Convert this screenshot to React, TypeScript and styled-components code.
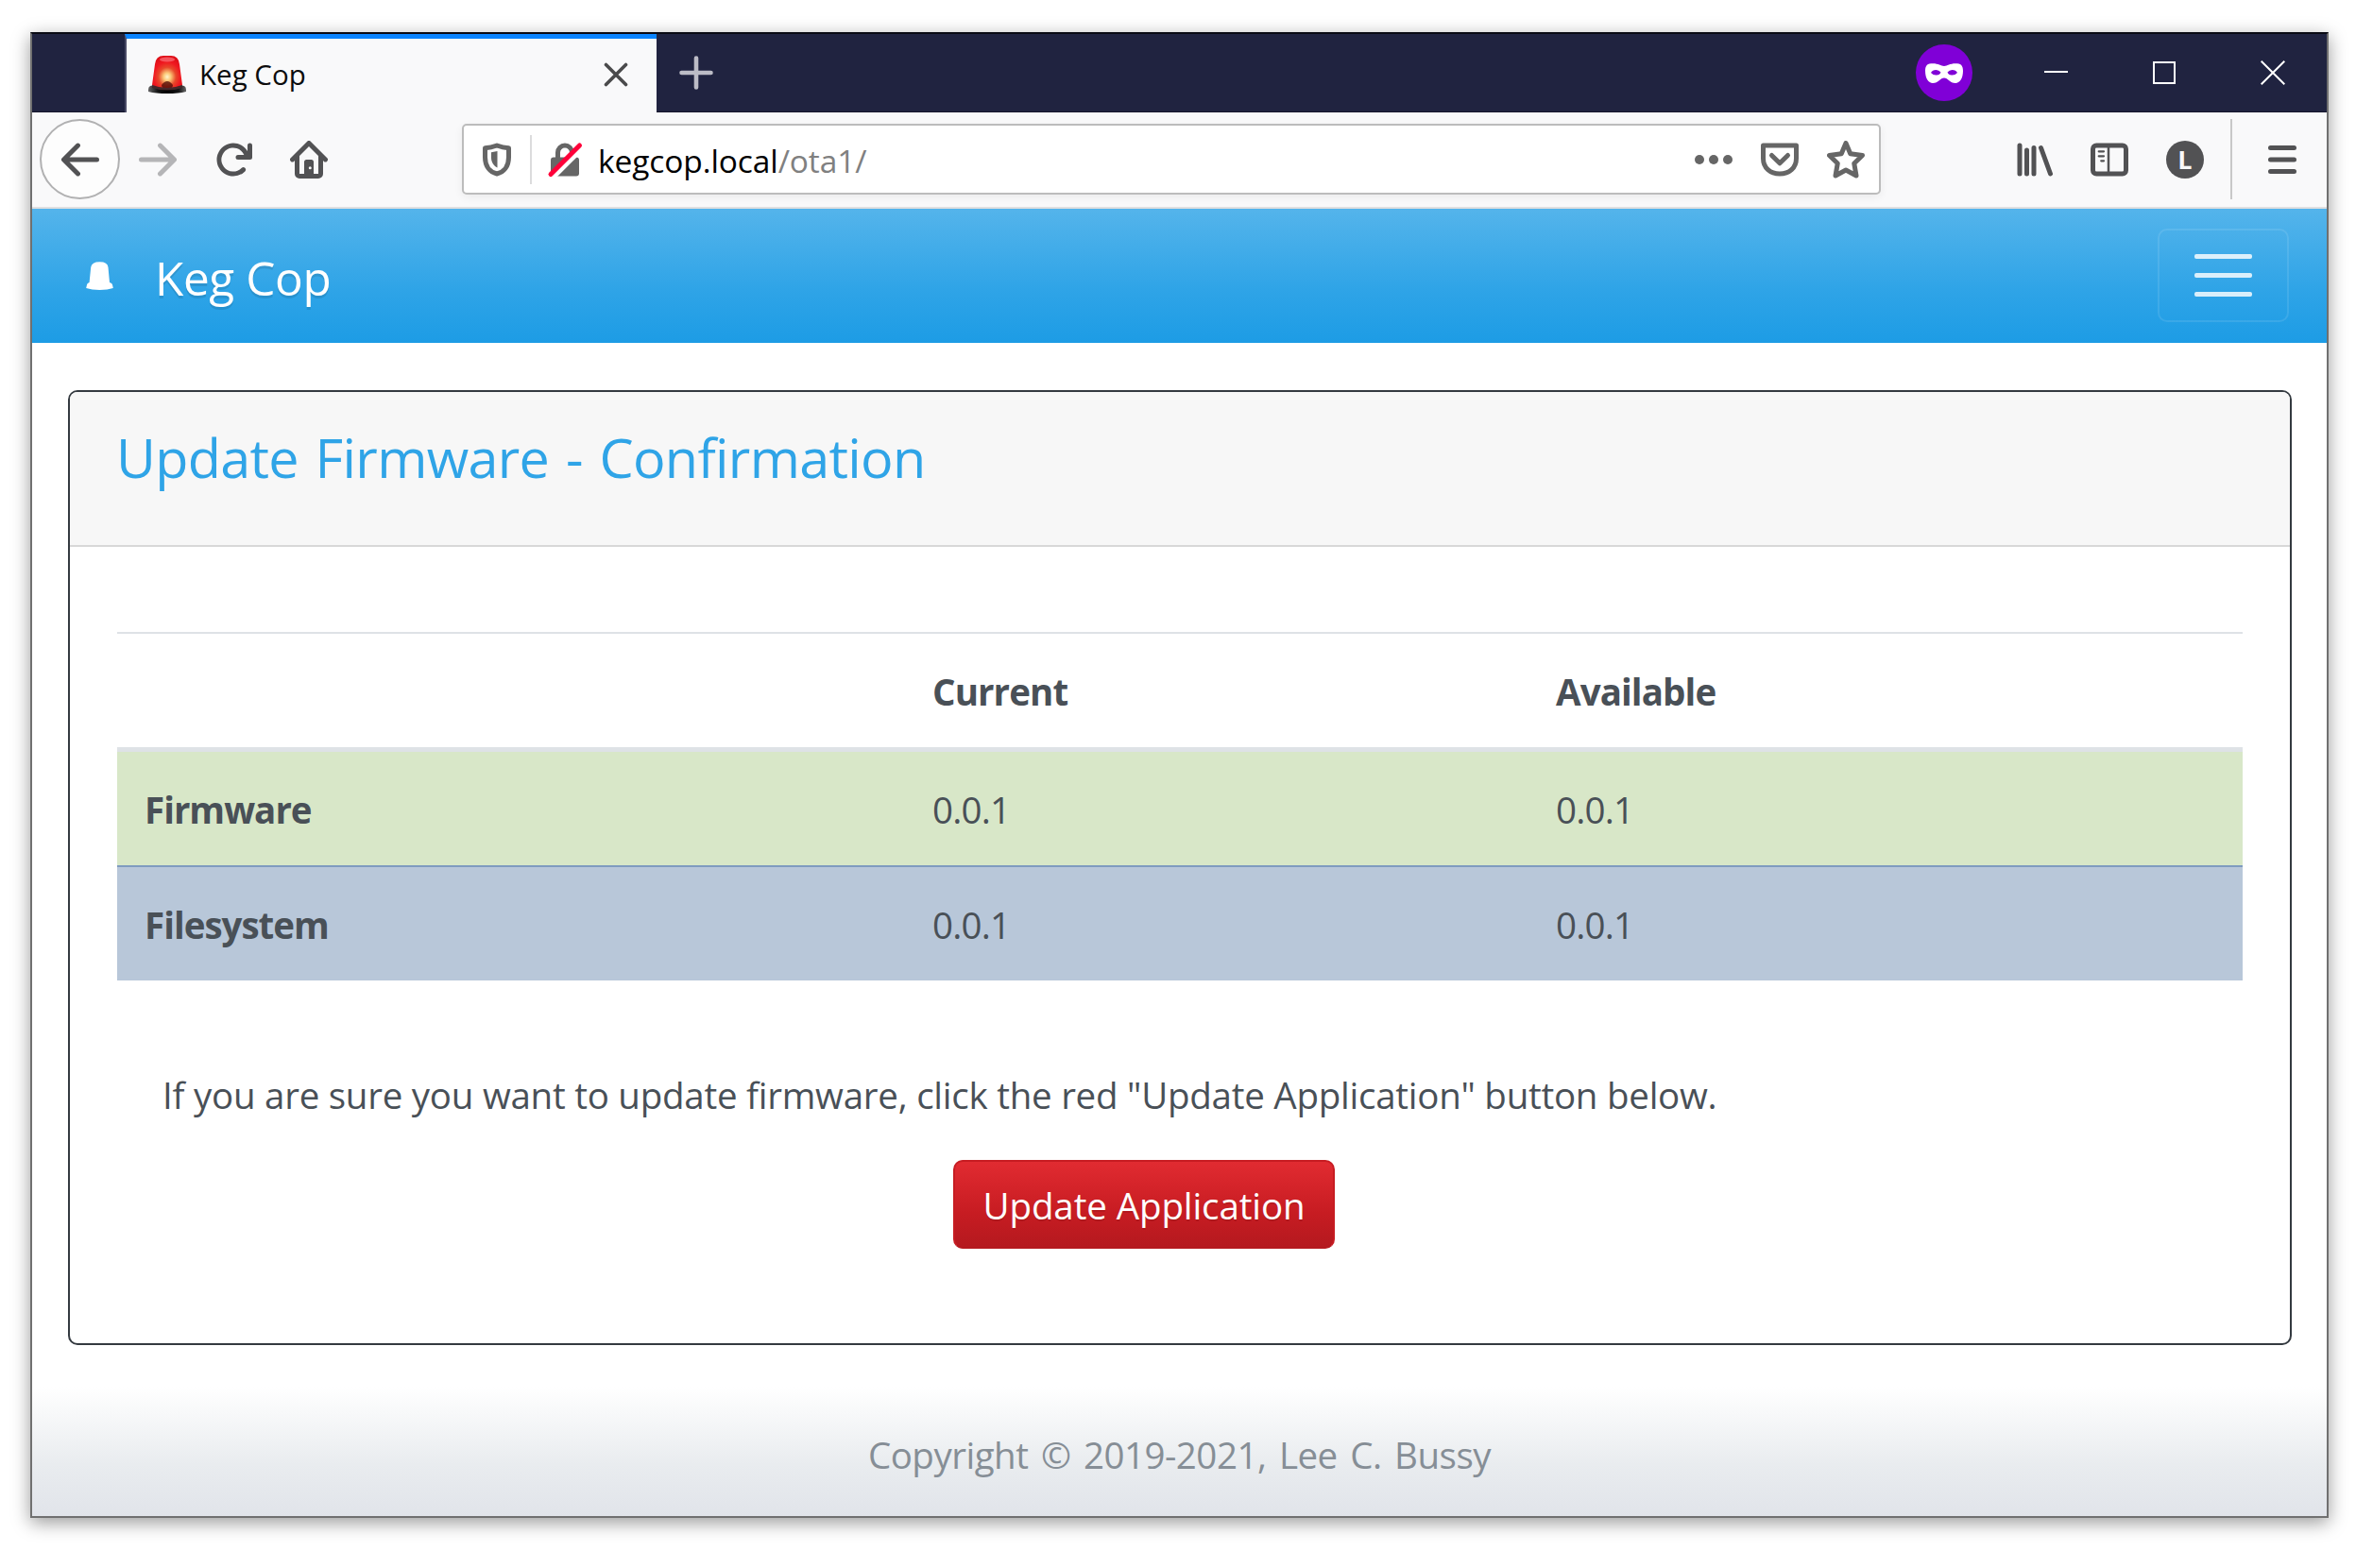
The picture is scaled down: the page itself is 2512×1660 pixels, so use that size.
import React from "react";
import styled, { createGlobalStyle } from "styled-components";

const GlobalStyle = createGlobalStyle`
  * { box-sizing: border-box; }
  html, body { margin: 0; background: #fff; }
  body { font-family: "Open Sans", "Noto Sans", sans-serif; color: #495057; }
`;

/* ---------- Window ---------- */

const Desktop = styled.div`
  width: 2512px;
  height: 1660px;
  padding: 34px 47px 53px 32px;
  background: #fff;
  overflow: hidden;
`;

const Window = styled.div`
  width: 2433px;
  height: 1573px;
  display: flex;
  flex-direction: column;
  border: 2px solid #707070;
  border-top-color: #0a0b14;
  background: #fff;
  box-shadow: 0 5px 18px rgba(0, 0, 0, 0.4);
`;

const TitleBar = styled.div`
  height: 83px;
  flex: none;
  display: flex;
  align-items: stretch;
  padding-left: 98px;
  background: #202340;
  box-shadow: inset 0 -1px 0 #14152b;
`;

const Tab = styled.div`
  width: 563px;
  display: flex;
  align-items: center;
  padding: 0 30px 2px 23px;
  border-left: 2px solid #4a4b66;
  border-top: 5px solid #0a84ff;
  background: #f9f9fa;
`;

const TabTitle = styled.span`
  flex: 1;
  margin-left: 14px;
  font-size: 29.5px;
  line-height: 40px;
  color: #0c0c0d;
`;

const NewTab = styled.div`
  display: flex;
  align-items: center;
  padding: 0 0 1px 24px;
`;

const WindowControls = styled.div`
  flex: 1;
  display: flex;
  align-items: center;
  justify-content: flex-end;
  padding: 0 44px 1px 0;
`;

const PrivateBadge = styled.div`
  width: 60px;
  height: 60px;
  margin-right: 76px;
  display: flex;
  align-items: center;
  justify-content: center;
  border-radius: 50%;
  background: #8000d7;
`;

const Minimize = styled.div`
  width: 25px;
  height: 2px;
  margin: 0 90px 2px 0;
  background: #fff;
`;

const Maximize = styled.div`
  width: 24px;
  height: 24px;
  margin-right: 90px;
  border: 2px solid #fff;
`;

/* ---------- Toolbar ---------- */

const Toolbar = styled.div`
  height: 102px;
  flex: none;
  display: flex;
  align-items: center;
  padding: 0 27px 1px 8px;
  border-bottom: 2px solid #dfdfe0;
  background: #f9f9fa;
  color: #525254;
`;

const BackButton = styled.div`
  width: 85px;
  height: 85px;
  display: flex;
  align-items: center;
  justify-content: center;
  border: 2px solid #b1b1b2;
  border-radius: 50%;
  background: #fdfdfd;
`;

const NavButtons = styled.div`
  display: flex;
  align-items: center;
  gap: 40px;
  margin: 0 142px 0 20px;
`;

const UrlBar = styled.div`
  width: 1502px;
  height: 75px;
  display: flex;
  align-items: center;
  padding: 0 15px;
  border: 2px solid #bcbcbc;
  border-radius: 5px;
  background: #fff;
  box-shadow: 0 3px 10px rgba(0, 0, 0, 0.06);
  color: #666;
`;

const UrlDivider = styled.div`
  width: 2px;
  height: 52px;
  margin: 0 15px;
  background: #dcdcdd;
`;

const UrlText = styled.span`
  flex: 1;
  margin-left: 15px;
  padding-top: 3px;
  font-size: 33.5px;
  line-height: 46px;
  letter-spacing: -0.1px;
  color: #808080;
`;

const UrlHost = styled.span`
  color: #000;
`;

const UrlActions = styled.div`
  display: flex;
  gap: 30px;
`;

const ToolButtons = styled.div`
  flex: 1;
  display: flex;
  align-items: center;
  justify-content: flex-end;
  gap: 40px;
`;

const Avatar = styled.div`
  width: 40px;
  height: 40px;
  display: flex;
  align-items: center;
  justify-content: center;
  border-radius: 50%;
  background: #525254;
  color: #f9f9fa;
  font-size: 27px;
  font-weight: 700;
  line-height: 40px;
`;

const ToolDivider = styled.div`
  width: 2px;
  height: 85px;
  margin: 0 -7px 0 -12px;
  background: #c8c8c8;
`;

const Glyph = styled.svg<{ $faded?: boolean }>`
  display: block;
  flex: none;
  opacity: ${(p) => (p.$faded ? 0.4 : 1)};
`;

/* ---------- Page ---------- */

const Navbar = styled.nav`
  height: 142px;
  flex: none;
  display: flex;
  align-items: center;
  padding: 0 40px 0 57px;
  background: linear-gradient(#54b4eb, #2fa4e7 60%, #1d9ce5);
  color: #fff;
`;

const Brand = styled.div`
  flex: 1;
  margin-left: 44px;
  padding-top: 3px;
  font-size: 49.5px;
  line-height: 70px;
  letter-spacing: -0.4px;
  text-shadow: 0 3px 0 rgba(0, 0, 0, 0.1);
`;

const Toggler = styled.button`
  width: 139px;
  height: 99px;
  display: flex;
  flex-direction: column;
  align-items: center;
  justify-content: center;
  gap: 15px;
  margin-bottom: 1px;
  padding: 0;
  border: 2px solid rgba(255, 255, 255, 0.1);
  border-radius: 10px;
  background: transparent;
`;

const TogglerBar = styled.span`
  width: 61px;
  height: 5px;
  border-radius: 2px;
  background: rgba(255, 255, 255, 0.82);
`;

const Card = styled.section`
  height: 1011px;
  flex: none;
  margin: 50px 37px 0 38px;
  border: 2px solid #343a40;
  border-radius: 10px;
  background: #fff;
  overflow: hidden;
`;

const CardHeader = styled.header`
  height: 164px;
  padding: 29px 49px 0;
  border-bottom: 2px solid #d8d8d8;
  background: #f7f7f7;
`;

const CardTitle = styled.h1`
  margin: 0;
  font-size: 57.5px;
  font-weight: 400;
  line-height: 80px;
  letter-spacing: -0.7px;
  word-spacing: 3.5px;
  color: #2fa4e7;
`;

const CardBody = styled.div`
  padding: 90px 50px 0;
`;

const Versions = styled.div`
  border-top: 2px solid #dee2e6;
`;

const tones = {
  head: "height: 125px; border-bottom: 5px solid #dee2e6;",
  green: "height: 120px; background: #d8e7c8;",
  blue: "height: 122px; border-top: 2px solid #7f9bbf; background: #b8c7d9;",
};

const Row = styled.div<{ $tone: keyof typeof tones }>`
  display: grid;
  grid-template-columns: 832px 660px 1fr;
  align-items: center;
  ${(p) => tones[p.$tone]}
`;

const Cell = styled.div<{ $bold?: boolean }>`
  padding-left: 31px;
  padding-top: 1px;
  font-size: 38.5px;
  line-height: 60px;
  font-weight: ${(p) => (p.$bold ? 700 : 400)};
  letter-spacing: ${(p) => (p.$bold ? -0.9 : -0.8)}px;
`;

const RowName = styled(Cell)`
  padding-left: 29px;
  letter-spacing: -1px;
`;

const Confirm = styled.div`
  display: flex;
  flex-direction: column;
  align-items: center;
  padding: 91px 76px 0 0;
`;

const Prompt = styled.p`
  align-self: flex-start;
  margin: 0 0 39px 48px;
  font-size: 38.5px;
  line-height: 60px;
  letter-spacing: -0.25px;
  white-space: nowrap;
`;

const UpdateButton = styled.button`
  width: 404px;
  height: 94px;
  padding: 2px 0 0;
  border: 2px solid #c71c22;
  border-bottom-color: #b5191f;
  border-radius: 10px;
  background: linear-gradient(#e12b31, #c71c22 60%, #b5191f);
  color: #fff;
  font: 400 38.5px/60px "Open Sans", "Noto Sans", sans-serif;
  letter-spacing: -0.1px;
  text-shadow: 0 2px 0 rgba(0, 0, 0, 0.1);
`;

const Footer = styled.footer`
  flex: 1;
  margin-top: 44px;
  padding-top: 42px;
  background: linear-gradient(#fff, #e9ecef 60%, #e1e4ea);
  color: #868e96;
  font-size: 38.5px;
  line-height: 60px;
  letter-spacing: -0.5px;
  word-spacing: 4px;
  text-align: center;
`;

/* ---------- Icons (16-unit grid) ---------- */

type IconProps = { children: React.ReactNode; faded?: boolean };

const Icon = ({ children, faded }: IconProps) => (
  <Glyph $faded={faded} width="40" height="40" viewBox="0 0 16 16" fill="currentColor">
    {children}
  </Glyph>
);

const Stroked = ({ children }: { children: React.ReactNode }) => (
  <g fill="none" stroke="currentColor" strokeWidth="2" strokeLinecap="round" strokeLinejoin="round">
    {children}
  </g>
);

const Siren = () => (
  <Glyph width="40" height="40" viewBox="0 0 40 40">
    <defs>
      <radialGradient id="lamp" cx="0.5" cy="0.64" r="0.6">
        <stop offset="0" stopColor="#fff6cf" />
        <stop offset="0.2" stopColor="#fbc878" />
        <stop offset="0.48" stopColor="#e8482a" />
        <stop offset="0.75" stopColor="#f01820" />
        <stop offset="1" stopColor="#e01018" />
      </radialGradient>
      <linearGradient id="base" x1="0" x2="1">
        <stop offset="0" stopColor="#666" />
        <stop offset="0.25" stopColor="#151515" />
        <stop offset="0.5" stopColor="#000" />
        <stop offset="0.8" stopColor="#151515" />
        <stop offset="1" stopColor="#666" />
      </linearGradient>
    </defs>
    <path d="M2 32 q6 -2 18 -2 t18 2 q2 1 2 4 v2 q-8 2 -20 2 t-20 -2 v-2 q0 -3 2 -4z" fill="url(#base)" />
    <path d="M7 9 Q8 0 16 0 H24 Q32 0 33 9 L36 31 Q28 35 20 35 T4 31z" fill="url(#lamp)" />
    <ellipse cx="20" cy="4" rx="8" ry="2.5" fill="#ff8088" opacity="0.6" />
    <path d="M14 31 Q20 23 26 31 Q26 35 20 35 T14 31z" fill="#4a0805" opacity="0.75" />
    <path d="M4 31 Q20 37 36 31 V34 Q20 39 4 34z" fill="#45282a" />
  </Glyph>
);

const Mask = () => (
  <Glyph width="40" height="21" viewBox="0 0 40 21">
    <path
      fillRule="evenodd"
      fill="#fff"
      d="M0 8 C0 2 2.500 0.300 8 0.300 C14 0.300 16.500 3 20 3 S26 0.300 32 0.300 C37.500 0.300 40 2 40 8 C40 16 36.500 21 32 21 C26 21 24 15.500 20 15.500 S14 21 8 21 C3.500 21 0 16 0 8Z M6 10 Q8.500 12.800 12 12.500 Q15.500 12.300 16.500 9.500 Q14.500 7 11.500 7 Q7.500 7 6 10Z M34 10 Q31.500 12.800 28 12.500 Q24.500 12.300 23.500 9.500 Q25.500 7 28.500 7 Q32.500 7 34 10Z"
    />
  </Glyph>
);

const CloseTab = () => (
  <Glyph width="26" height="26" viewBox="0 0 26 26" stroke="#4a4a4b" strokeWidth="3.6" strokeLinecap="round">
    <path d="M2.500 2.500 L23.500 23.500 M23.500 2.500 L2.500 23.500" />
  </Glyph>
);

const Plus = () => (
  <Glyph width="36" height="36" viewBox="0 0 36 36" stroke="#bcbcc6" strokeWidth="4.6" strokeLinecap="round">
    <path d="M18 2.500 V33.500 M2.500 18 H33.500" />
  </Glyph>
);

const CloseWindow = () => (
  <Glyph width="26" height="26" viewBox="0 0 26 26" stroke="#fff" strokeWidth="2">
    <path d="M0.700 0.700 L25.300 25.300 M25.300 0.700 L0.700 25.300" />
  </Glyph>
);

const Back = () => (
  <Icon>
    <path d="M15 7H3.414l4.293-4.293a1 1 0 0 0-1.414-1.414l-6 6a1 1 0 0 0 0 1.414l6 6a1 1 0 0 0 1.414-1.414L3.414 9H15a1 1 0 0 0 0-2z" />
  </Icon>
);

const Forward = () => (
  <Icon faded>
    <path d="M1 7h11.586L8.293 2.707a1 1 0 0 1 1.414-1.414l6 6a1 1 0 0 1 0 1.414l-6 6a1 1 0 0 1-1.414-1.414L12.586 9H1a1 1 0 0 1 0-2z" />
  </Icon>
);

const Reload = () => (
  <Icon>
    <path d="M15 1a1 1 0 0 0-1 1v2.418A6.995 6.995 0 1 0 8 15a6.954 6.954 0 0 0 4.950-2.050 1 1 0 0 0-1.414-1.414A5.019 5.019 0 1 1 12.549 6H10a1 1 0 0 0 0 2h5a1 1 0 0 0 1-1V2a1 1 0 0 0-1-1z" />
  </Icon>
);

const Home = () => (
  <Icon>
    <path
      fillRule="evenodd"
      d="M15.707 7.293l-7-7a1 1 0 0 0-1.414 0l-7 7a1 1 0 0 0 1.414 1.414L2 8.414V14a2 2 0 0 0 2 2h8a2 2 0 0 0 2-2V8.414l.293.293a1 1 0 0 0 1.414-1.414z M4 6.414L8 2.414l4 4V14h-2V9a1 1 0 0 0-1-1H7a1 1 0 0 0-1 1v5H4z M8.500 10.900a.6.6 0 1 1 0 1.200a.6.6 0 0 1 0-1.200z"
    />
  </Icon>
);

const Shield = () => (
  <Icon>
    <Stroked>
      <path d="M3 3.100 Q5.500 2.900 8 2 Q10.500 2.900 13 3.100 V7 C13 11 10.900 13.300 8 14 C5.100 13.300 3 11 3 7Z" />
    </Stroked>
    <path d="M8.200 4.400 L5.600 4.900 V7 C5.600 9.200 6.600 10.600 8.200 11.400z" />
  </Icon>
);

const InsecureLock = () => (
  <Icon>
    <path d="M5 8 V5 a3 3 0 0 1 6 0 V8" fill="none" stroke="currentColor" strokeWidth="2" />
    <rect x="2" y="7" width="12" height="8" rx="1.200" />
    <path d="M2.500 15.200 L15 2.700" stroke="#fff" strokeWidth="3.200" />
    <path d="M2 14.200 L14.200 2" stroke="#ff0039" strokeWidth="2" strokeLinecap="round" />
  </Icon>
);

const Dots = () => (
  <Icon>
    <circle cx="2" cy="8" r="2" />
    <circle cx="8" cy="8" r="2" />
    <circle cx="14" cy="8" r="2" />
  </Icon>
);

const Pocket = () => (
  <Icon>
    <Stroked>
      <path d="M1 2 H15 V7.500 C15 11.500 12 14 8 14 S1 11.500 1 7.500Z" />
      <path d="M4.600 6.200 L8 9.500 L11.400 6.200" />
    </Stroked>
  </Icon>
);

const Star = () => (
  <Icon>
    <Stroked>
      <path d="M8 1 L9.900 5.500 L15 6.200 L11.500 9.600 L12.400 14.800 L8 12.400 L3.600 14.800 L4.500 9.600 L1 6.200 L6.100 5.500Z" />
    </Stroked>
  </Icon>
);

const Library = () => (
  <Icon>
    <Stroked>
      <path d="M2 2 V14 M5 4 V14 M8 3 V14 M11 3 L15 14" />
    </Stroked>
  </Icon>
);

const Sidebar = () => (
  <Icon>
    <rect x="1" y="2" width="14" height="12" rx="1.500" fill="none" stroke="currentColor" strokeWidth="2" />
    <path d="M7.600 2 V14" stroke="currentColor" />
    <path d="M3.500 4.500 H5.600 M3.500 6.500 H5.600 M4.500 8.500 H5.600" stroke="currentColor" strokeWidth="0.900" strokeLinecap="round" />
  </Icon>
);

const Menu = () => (
  <Icon>
    <Stroked>
      <path d="M3 3 H13 M3 8 H13 M3 13 H13" />
    </Stroked>
  </Icon>
);

const BrandMark = () => (
  <Glyph width="29" height="30" viewBox="0 0 29 30" fill="#fff">
    <path d="M5.200 6 Q6 0.200 14.500 0.200 T23.500 6 L25 22 Q27.800 22.800 28 24.500 L28.800 28 Q23 29.900 14.500 29.900 T0.200 28 L1 24.500 Q1.200 22.800 3.600 22z" />
  </Glyph>
);

/* ---------- App ---------- */

const versions = [
  { name: "Firmware", current: "0.0.1", available: "0.0.1", tone: "green" as const },
  { name: "Filesystem", current: "0.0.1", available: "0.0.1", tone: "blue" as const },
];

export default function App() {
  return (
    <Desktop>
      <GlobalStyle />
      <Window>
        <TitleBar>
          <Tab>
            <Siren />
            <TabTitle>Keg Cop</TabTitle>
            <CloseTab />
          </Tab>
          <NewTab>
            <Plus />
          </NewTab>
          <WindowControls>
            <PrivateBadge>
              <Mask />
            </PrivateBadge>
            <Minimize />
            <Maximize />
            <CloseWindow />
          </WindowControls>
        </TitleBar>

        <Toolbar>
          <BackButton>
            <Back />
          </BackButton>
          <NavButtons>
            <Forward />
            <Reload />
            <Home />
          </NavButtons>
          <UrlBar>
            <Shield />
            <UrlDivider />
            <InsecureLock />
            <UrlText>
              <UrlHost>kegcop.local</UrlHost>/ota1/
            </UrlText>
            <UrlActions>
              <Dots />
              <Pocket />
              <Star />
            </UrlActions>
          </UrlBar>
          <ToolButtons>
            <Library />
            <Sidebar />
            <Avatar>L</Avatar>
            <ToolDivider />
            <Menu />
          </ToolButtons>
        </Toolbar>

        <Navbar>
          <BrandMark />
          <Brand>Keg Cop</Brand>
          <Toggler aria-label="Menu">
            <TogglerBar />
            <TogglerBar />
            <TogglerBar />
          </Toggler>
        </Navbar>

        <Card>
          <CardHeader>
            <CardTitle>Update Firmware - Confirmation</CardTitle>
          </CardHeader>
          <CardBody>
            <Versions>
              <Row $tone="head">
                <Cell />
                <Cell $bold>Current</Cell>
                <Cell $bold>Available</Cell>
              </Row>
              {versions.map((v) => (
                <Row key={v.name} $tone={v.tone}>
                  <RowName $bold>{v.name}</RowName>
                  <Cell>{v.current}</Cell>
                  <Cell>{v.available}</Cell>
                </Row>
              ))}
            </Versions>
            <Confirm>
              <Prompt>
                If you are sure you want to update firmware, click the red "Update Application" button below.
              </Prompt>
              <UpdateButton>Update Application</UpdateButton>
            </Confirm>
          </CardBody>
        </Card>

        <Footer>Copyright © 2019-2021, Lee C. Bussy</Footer>
      </Window>
    </Desktop>
  );
}
